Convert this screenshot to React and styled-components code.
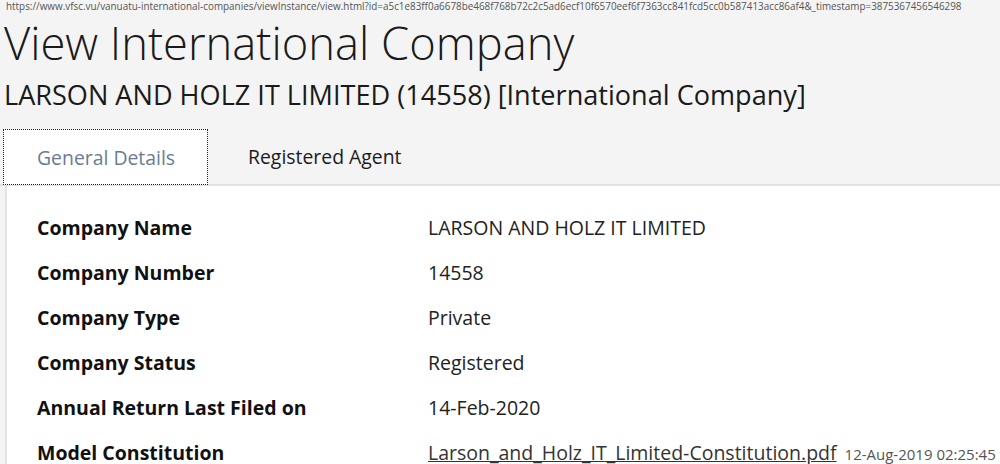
import React from 'react';
import styled, { createGlobalStyle } from 'styled-components';

const GlobalStyle = createGlobalStyle`
	html, body {
		margin: 0;
		padding: 0;
		background: #f4f4f4;
		font-family: 'Open Sans', 'Noto Sans', sans-serif;
		color: #1c1c1c;
		overflow: hidden;
	}
`;

const rows = [
	{ label: 'Company Name', value: 'LARSON AND HOLZ IT LIMITED' },
	{ label: 'Company Number', value: '14558' },
	{ label: 'Company Type', value: 'Private' },
	{ label: 'Company Status', value: 'Registered' },
	{ label: 'Annual Return Last Filed on', value: '14-Feb-2020' },
	{
		label: 'Model Constitution',
		link: 'Larson_and_Holz_IT_Limited-Constitution.pdf',
		stamp: '12-Aug-2019 02:25:45',
	},
];

const tabs = ['General Details', 'Registered Agent'];

export default function App() {
	return (
		<>
			<GlobalStyle />
			<Page>
				<Url>
					https://www.vfsc.vu/vanuatu-international-companies/viewInstance/view.html?id=a5c1e83ff0a6678be468f768b72c2c5ad6ecf10f6570eef6f7363cc841fcd5cc0b587413acc86af4&amp;_timestamp=3875367456546298
				</Url>
				<Title>View International Company</Title>
				<Subtitle>LARSON AND HOLZ IT LIMITED (14558) [International Company]</Subtitle>
				<TabBar>
					{tabs.map((t, i) => (
						<Tab key={t} active={i === 0}>
							{t}
						</Tab>
					))}
				</TabBar>
				<Panel>
					{rows.map(row => (
						<Row key={row.label}>
							<Label>{row.label}</Label>
							<Value>
								{row.link ? (
									<>
										<FileLink href="#">{row.link}</FileLink>
										<Stamp>{row.stamp}</Stamp>
									</>
								) : (
									row.value
								)}
							</Value>
						</Row>
					))}
				</Panel>
			</Page>
		</>
	);
}

const Page = styled.div`
	width: 1000px;
	height: 464px;
	overflow: hidden;
	display: flex;
	flex-direction: column;
	& > * {
		flex-shrink: 0;
	}
`;

const Url = styled.div`
	font-size: 9.9px;
	line-height: 13px;
	color: #555;
	padding: 0 0 0 6px;
	white-space: nowrap;
`;

const Title = styled.h1`
	margin: 0;
	padding-left: 4px;
	font-size: 45.3px;
	font-weight: 300;
	line-height: 60px;
	color: #1a1a1a;
	white-space: nowrap;
`;

const Subtitle = styled.h2`
	margin: 4px 0 0;
	padding-left: 4px;
	font-size: 27.1px;
	font-weight: 400;
	line-height: 36px;
	color: #1a1a1a;
	white-space: nowrap;
`;

const TabBar = styled.div`
	display: flex;
	margin-top: 16px;
	padding-left: 3px;
	border-bottom: 2px solid #e2e2e2;
	height: 55px;
`;

const Tab = styled.div`
	width: ${p => (p.active ? '205px' : 'auto')};
	box-sizing: border-box;
	display: flex;
	align-items: center;
	padding: ${p => (p.active ? '0 0 0 33px' : '0 0 0 39px')};
	font-size: 19.4px;
	background: ${p => (p.active ? '#fff' : 'transparent')};
	color: ${p => (p.active ? '#6a7c95' : '#1c1c1c')};
	border: ${p => (p.active ? '1px dotted #222' : '1px solid transparent')};
	margin-bottom: ${p => (p.active ? '-1px' : '0')};
`;

const Panel = styled.div`
	flex: 1;
	background: #fff;
	margin-left: 5px;
	border-left: 2px solid #e4e4e4;
	padding: 28px 0 0 30px;
	display: flex;
	flex-direction: column;
`;

const Row = styled.div`
	display: flex;
	align-items: baseline;
	height: 45px;
	flex-shrink: 0;
`;

const Label = styled.div`
	width: 391px;
	font-size: 19.5px;
	font-weight: 700;
	color: #111;
	white-space: nowrap;
`;

const Value = styled.div`
	font-size: 19.5px;
	color: #222;
	white-space: nowrap;
`;

const FileLink = styled.a`
	color: #333;
	text-decoration: underline;
`;

const Stamp = styled.span`
	margin-left: 8px;
	font-size: 15px;
	color: #555;
`;
